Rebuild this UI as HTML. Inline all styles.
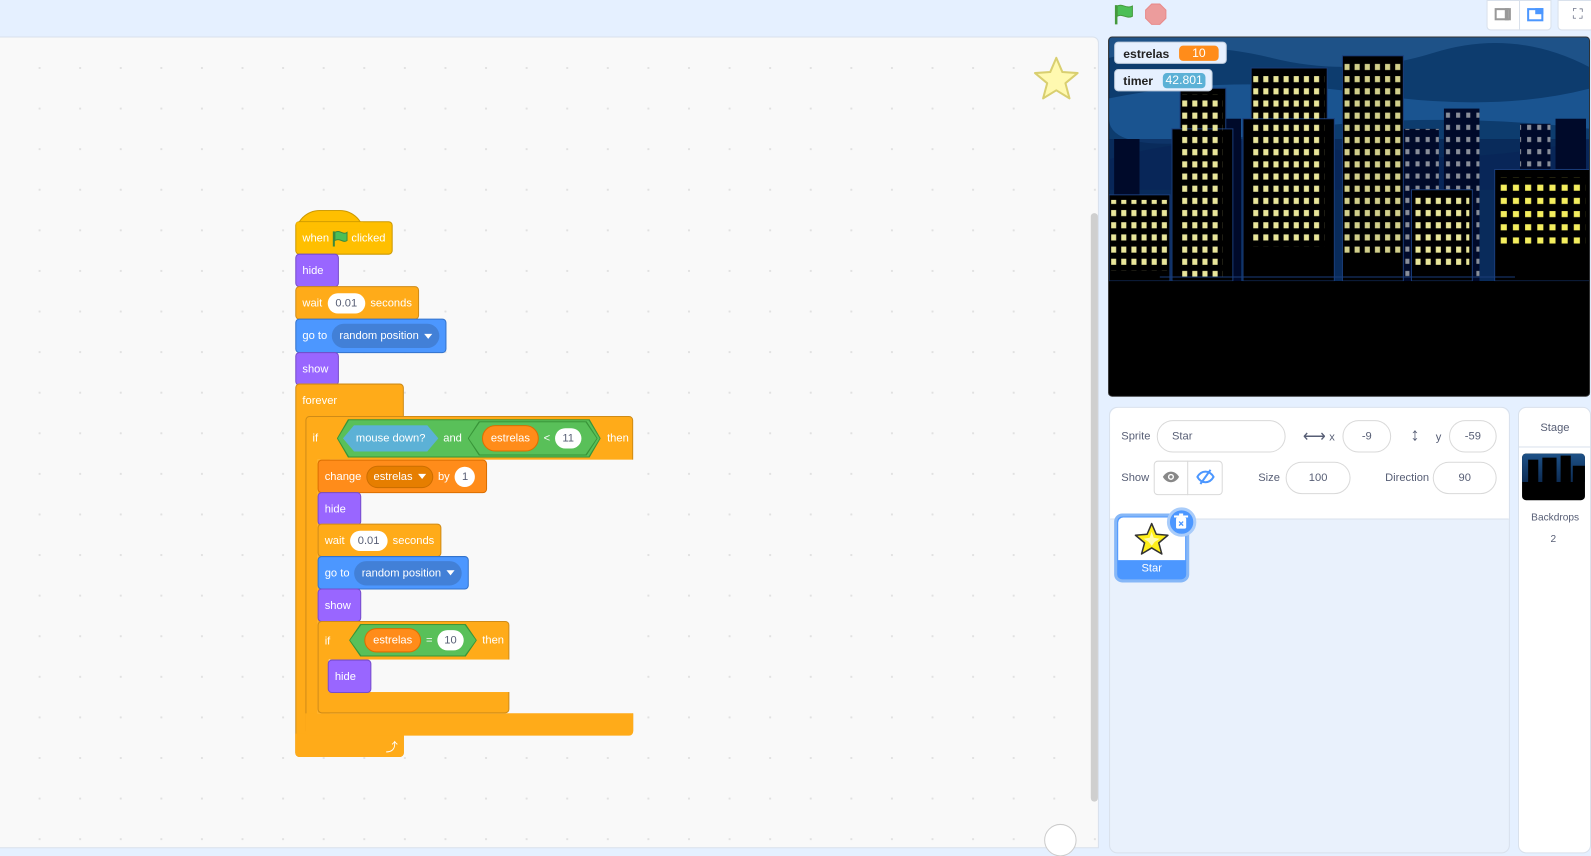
<!DOCTYPE html>
<html><head><meta charset="utf-8"><style>
*{box-sizing:border-box;margin:0;padding:0}
html,body{width:1591px;height:833px;overflow:hidden;background:#e5f0ff}
#root{position:absolute;left:0;top:0;width:1568px;height:821px;transform:scale(1.0147);transform-origin:0 0;font-family:"Liberation Sans",Arial,sans-serif}
.abs{position:absolute}
.code{left:-2px;top:36px;width:1085px;height:800px;background:#f9f9f9;border:1px solid #d9e1ec;border-radius:0 6px 0 0;
background-image:radial-gradient(#e1e1e1 1px,transparent 1.2px);background-size:40px 40px;background-position:20px 10px}
.b{position:absolute;color:#fff;font-size:11px;display:flex;align-items:center;padding-left:6px;padding-right:6px;white-space:nowrap;border-radius:4px}
.ev{background:#ffbf00;border:1px solid #cc9900}
.lo{background:#ffab19;border:1px solid #cf8b17}
.ct{background:#ffab19}
.lk{background:#9966ff;border:1px solid #774dcb}
.mo{background:#4c97ff;border:1px solid #3373cc}
.va{background:#ff8c1a;border:1px solid #db6e00}
.in{display:inline-flex;align-items:center;justify-content:center;background:#fff;color:#575e75;border-radius:11px;height:20px;padding:0 8px;margin:0 5px}
.dd{display:inline-flex;align-items:center;background:#4280d7;border-radius:12px;height:24px;padding:0 7px;margin-left:5px}
.dd2{display:inline-flex;align-items:center;background:#e67e00;border-radius:11px;height:22px;padding:0 6px;margin:0 5px;border:1px solid #cc6e00}
.tri{display:inline-block;width:0;height:0;border-left:4px solid transparent;border-right:4px solid transparent;border-top:5px solid #fff;margin-left:5px}
.hex{position:absolute;background:#59c059;clip-path:polygon(0 50%,11px 0,calc(100% - 11px) 0,100% 50%,calc(100% - 11px) 100%,11px 100%)}
.pill{position:absolute;color:#fff;font-size:11px;display:flex;align-items:center;justify-content:center}
.panel{background:#fff;border:1px solid #d9e1ec;border-radius:8px}
.lbl{position:absolute;font-size:11px;color:#575e75}
.fld{position:absolute;border:1px solid #d9d9d9;border-radius:16px;background:#fff;font-size:11px;color:#575e75;display:flex;align-items:center;justify-content:center}
</style></head><body><div id="root">
<div class="abs code"></div>
<div class="abs" style="left:1075px;top:210px;width:7px;height:580px;background:#cfcfcf;border-radius:4px"></div>
<div class="abs" style="left:1029px;top:812px;width:32px;height:32px;border:1px solid #ccc;border-radius:50%;background:#fff"></div>
<svg class="abs" style="left:1017px;top:54px" width="48" height="46" viewBox="0 0 48 46"><path d="M24 3 L30 17 L45 18 L33 28 L37 43 L24 35 L11 43 L15 28 L3 18 L18 17 Z" fill="#fff9b0" stroke="#d9cf70" stroke-width="2" stroke-linejoin="round"/></svg>

<div class="abs" style="left:291px;top:207px;width:68px;height:24px;background:#ffbf00;border-radius:34px 34px 0 0;border:1px solid #cc9900;border-bottom:none"></div>
<div class="b ev" style="left:291px;top:218px;min-width:96px;height:33px">when <svg width="16" height="16" style="margin:0 3px"><path d="M2 1v15" stroke="#3d8a3d" stroke-width="2"/><path d="M3 2c5-3 8 3 12 0v8c-4 3-7-3-12 0z" fill="#4cbf56" stroke="#3d8a3d"/></svg>clicked</div>
<div class="abs" style="left:292px;top:219px;width:66px;height:6px;background:#ffbf00"></div>
<div class="b lk" style="left:291px;top:250px;min-width:43px;height:33px">hide</div>
<div class="b lo" style="left:291px;top:282px;min-width:118px;height:33px">wait<span class="in">0.01</span>seconds</div>
<div class="b mo" style="left:291px;top:314px;min-width:144px;height:34px">go to<span class="dd">random position<span class="tri"></span></span></div>
<div class="b lk" style="left:291px;top:347px;min-width:43px;height:33px">show</div>
<div class="b lo" style="left:291px;top:378px;width:107px;height:368px;align-items:flex-start;padding-top:10px">forever</div>
<div class="abs" style="left:291px;top:723px;width:107px;height:23px;background:#ffab19;border-radius:0 0 4px 4px"></div>
<div class="abs" style="left:380px;top:727px;color:#fff;font-size:12px">⤴</div>
<div class="b ct" style="left:301px;top:410px;width:323px;height:314px;align-items:flex-start;padding-top:15px;border:1px solid #cf8b17">if</div>
<div class="abs" style="left:313px;top:453px;width:314px;height:250px;background:#f9f9f9"></div>
<div class="abs" style="left:313px;top:453px;width:12px;height:250px;background:#ffab19"></div>
<div class="hex" style="left:332px;top:413px;width:260px;height:38px;background:#389438"></div>
<div class="hex" style="left:333px;top:414px;width:258px;height:36px"></div>
<div class="hex" style="left:338px;top:419px;width:94px;height:26px;background:#5cb1d6"></div>
<div class="pill" style="left:338px;top:419px;width:94px;height:26px">mouse down?</div>
<div class="pill" style="left:432px;top:419px;width:28px;height:26px">and</div>
<div class="hex" style="left:461px;top:415px;width:128px;height:34px;background:#389438"></div>
<div class="hex" style="left:462px;top:416px;width:126px;height:32px"></div>
<div class="pill" style="left:475px;top:419px;width:56px;height:26px;background:#ff8c1a;border-radius:13px;border:1px solid #db6e00">estrelas</div>
<div class="pill" style="left:532px;top:419px;width:14px;height:26px">&lt;</div>
<div class="pill" style="left:547px;top:422px;width:26px;height:20px;background:#fff;color:#575e75;border-radius:10px">11</div>
<div class="pill" style="left:594px;top:419px;width:30px;height:26px">then</div>
<div class="abs" style="left:301px;top:703px;width:323px;height:22px;background:#ffab19;border-radius:0 0 4px 4px"></div>

<div class="b va" style="left:313px;top:453px;min-width:165px;height:33px">change<span class="dd2">estrelas<span class="tri"></span></span>by<span class="in" style="padding:0 7px">1</span></div>
<div class="b lk" style="left:313px;top:485px;min-width:43px;height:33px">hide</div>
<div class="b lo" style="left:313px;top:516px;min-width:118px;height:33px">wait<span class="in">0.01</span>seconds</div>
<div class="b mo" style="left:313px;top:548px;min-width:144px;height:33px">go to<span class="dd">random position<span class="tri"></span></span></div>
<div class="b lk" style="left:313px;top:580px;min-width:43px;height:33px">show</div>
<div class="b ct" style="left:313px;top:612px;width:189px;height:91px;align-items:flex-start;padding-top:13px;border:1px solid #cf8b17">if</div>
<div class="abs" style="left:324px;top:650px;width:181px;height:32px;background:#f9f9f9"></div>
<div class="hex" style="left:344px;top:615px;width:126px;height:32px;background:#389438"></div>
<div class="hex" style="left:345px;top:616px;width:124px;height:30px"></div>
<div class="pill" style="left:359px;top:619px;width:56px;height:24px;background:#ff8c1a;border-radius:12px;border:1px solid #db6e00">estrelas</div>
<div class="pill" style="left:415px;top:619px;width:16px;height:24px">=</div>
<div class="pill" style="left:431px;top:621px;width:26px;height:20px;background:#fff;color:#575e75;border-radius:10px">10</div>
<div class="pill" style="left:472px;top:619px;width:28px;height:24px">then</div>
<div class="b lk" style="left:323px;top:650px;min-width:43px;height:33px">hide</div>

<svg class="abs" style="left:1097px;top:3px" width="22" height="22"><path d="M3 2v19" stroke="#45993d" stroke-width="2.5"/><path d="M4 3c5-3 9 3 15 0v10c-6 3-10-3-15 0z" fill="#4cbf56" stroke="#45993d"/></svg>
<svg class="abs" style="left:1128px;top:3px" width="22" height="22"><polygon points="7,1 15,1 21,7 21,15 15,21 7,21 1,15 1,7" fill="#ec9c9c" stroke="#e88a8a"/></svg>
<div class="abs" style="left:1465px;top:0;width:64px;height:30px;background:#fff;border:1px solid #d9e1ec;border-radius:0 0 4px 4px"></div>
<div class="abs" style="left:1497px;top:0;width:1px;height:30px;background:#d9e1ec"></div>
<div class="abs" style="left:1473px;top:8px;width:16px;height:12px;border:2px solid #999"></div>
<div class="abs" style="left:1483px;top:8px;width:4px;height:12px;background:#999"></div>
<div class="abs" style="left:1505px;top:8px;width:16px;height:13px;border:2px solid #4c97ff"></div>
<div class="abs" style="left:1513px;top:8px;width:8px;height:6px;background:#4c97ff"></div>
<div class="abs" style="left:1535px;top:0;width:40px;height:30px;background:#fff;border:1px solid #d9e1ec;border-radius:0 0 4px 4px;font-size:14px;color:#575e75;text-align:center;padding-top:4px">⛶</div>

<div class="abs" style="left:1092px;top:36px;width:475px;height:355px;border:1px solid #333;border-radius:4px;overflow:hidden;background:#000">
<svg width="475" height="355" viewBox="0 0 475 355">
<defs>
<pattern id="w" width="10" height="12" patternUnits="userSpaceOnUse"><rect x="2" y="2" width="5" height="6" fill="#e9e69a"/></pattern>
<pattern id="w2" width="10" height="12" patternUnits="userSpaceOnUse"><rect x="2" y="2" width="4" height="5" fill="#8a8f9a"/></pattern>
<pattern id="w3" width="12" height="13" patternUnits="userSpaceOnUse"><rect x="2" y="2" width="6" height="6" fill="#f4ee5e"/></pattern>
</defs>
<rect width="475" height="240" fill="#0d3c6e"/>
<path d="M0 20 Q80 0 160 20 T320 15 T475 30 V0 H0z" fill="#1e5288"/>
<path d="M0 60 Q120 35 250 55 T475 50 V90 Q300 70 150 95 T0 80z" fill="#1e5a98" opacity=".8"/>
<path d="M0 120 Q100 90 220 110 T475 100 V150 H0z" fill="#0b3166"/>
<rect x="0" y="100" width="475" height="140" fill="#06204f" opacity=".6"/>
<g fill="#000a2a"><rect x="5" y="100" width="25" height="140"/><rect x="100" y="80" width="30" height="160"/><rect x="285" y="90" width="40" height="150"/><rect x="330" y="70" width="35" height="170"/><rect x="405" y="85" width="30" height="155"/><rect x="440" y="80" width="30" height="160"/></g>
<rect x="285" y="90" width="40" height="150" fill="url(#w2)"/><rect x="330" y="70" width="35" height="170" fill="url(#w2)"/><rect x="405" y="85" width="30" height="155" fill="url(#w2)"/>
<g fill="#000" stroke="#1a3d7a">
<rect x="0" y="155" width="60" height="85"/>
<rect x="70" y="50" width="45" height="190"/><rect x="62" y="90" width="60" height="150"/>
<rect x="140" y="30" width="75" height="210"/><rect x="132" y="80" width="90" height="160"/>
<rect x="230" y="18" width="60" height="222"/>
<rect x="298" y="150" width="60" height="90"/>
<rect x="380" y="130" width="95" height="110"/>
</g>
<rect x="2" y="160" width="56" height="70" fill="url(#w)"/>
<rect x="72" y="56" width="40" height="180" fill="url(#w)"/>
<rect x="142" y="36" width="70" height="170" fill="url(#w)"/>
<rect x="232" y="24" width="56" height="190" fill="url(#w)" opacity=".9"/>
<rect x="300" y="156" width="55" height="70" fill="url(#w)"/>
<rect x="385" y="138" width="85" height="70" fill="url(#w3)"/>
<rect x="0" y="240" width="475" height="115" fill="#000"/>
<line x1="50" y1="236" x2="400" y2="236" stroke="#1a3d7a"/>
</svg>
</div>
<div class="abs" style="left:1098px;top:41px;width:111px;height:22px;background:#e6f0ff;border:1px solid #c4d0e0;border-radius:4px;font-size:12px;font-weight:bold"><span style="position:absolute;left:8px;top:4px;color:#222">estrelas</span><span style="position:absolute;left:63px;top:3px;width:39px;height:15px;background:#ff8c1a;border-radius:4px;color:#fff;text-align:center;font-weight:normal">10</span></div>
<div class="abs" style="left:1098px;top:68px;width:97px;height:22px;background:#e6f0ff;border:1px solid #c4d0e0;border-radius:4px;font-size:12px;font-weight:bold"><span style="position:absolute;left:8px;top:4px;color:#222">timer</span><span style="position:absolute;left:47px;top:3px;width:42px;height:15px;background:#5cb1d6;border-radius:4px;color:#fff;text-align:center;font-weight:normal">42.801</span></div>

<div class="abs panel" style="left:1093px;top:401px;width:395px;height:440px;background:#e9f1fc"></div>
<div class="abs" style="left:1094px;top:402px;width:393px;height:110px;background:#fff;border-radius:8px 8px 0 0;border-bottom:1px solid #d9e1ec"></div>
<div class="lbl" style="left:1105px;top:424px">Sprite</div>
<div class="fld" style="left:1140px;top:414px;width:127px;height:32px;justify-content:flex-start;padding-left:14px">Star</div>
<div class="lbl" style="left:1284px;top:420px;font-size:16px">⟷</div>
<div class="lbl" style="left:1310px;top:425px">x</div>
<div class="fld" style="left:1323px;top:414px;width:48px;height:32px">-9</div>
<div class="lbl" style="left:1390px;top:418px;font-size:18px;font-weight:bold">↕</div>
<div class="lbl" style="left:1415px;top:425px">y</div>
<div class="fld" style="left:1428px;top:414px;width:47px;height:32px">-59</div>
<div class="lbl" style="left:1105px;top:465px">Show</div>
<div class="abs" style="left:1137px;top:454px;width:68px;height:34px;border:1px solid #d9d9d9;border-radius:4px;background:#fff"></div>
<div class="abs" style="left:1170px;top:454px;width:1px;height:34px;background:#d9d9d9"></div>
<svg class="abs" style="left:1145px;top:463px" width="18" height="14"><path d="M1 7c4-7 12-7 16 0c-4 7-12 7-16 0z" fill="#888"/><circle cx="9" cy="7" r="3" fill="#fff"/><circle cx="9" cy="7" r="1.6" fill="#888"/></svg>
<svg class="abs" style="left:1179px;top:462px" width="18" height="16"><path d="M1 8c4-7 12-7 16 0c-4 7-12 7-16 0z" fill="none" stroke="#4c97ff" stroke-width="2"/><path d="M4 15L14 1" stroke="#4c97ff" stroke-width="2"/></svg>
<div class="lbl" style="left:1240px;top:465px">Size</div>
<div class="fld" style="left:1267px;top:455px;width:64px;height:32px">100</div>
<div class="lbl" style="left:1365px;top:465px">Direction</div>
<div class="fld" style="left:1412px;top:455px;width:63px;height:32px">90</div>
<div class="abs" style="left:1098px;top:506px;width:74px;height:68px;border:3px solid #86b7f7;border-radius:8px;background:#4c97ff"></div>
<div class="abs" style="left:1102px;top:510px;width:66px;height:42px;background:#fff;border-radius:5px 5px 0 0"></div>
<svg class="abs" style="left:1117px;top:514px" width="36" height="34"><path d="M18 2 L22.5 12.5 L34 13.5 L25 21 L28 32 L18 26 L8 32 L11 21 L2 13.5 L13.5 12.5 Z" fill="#ffef1a" stroke="#333" stroke-width="1.5" stroke-linejoin="round"/><path d="M18 10L20 16L26 17L21 20L18 24L15 20L10 17L16 16Z" fill="#fffbb0"/></svg>
<div class="abs" style="left:1102px;top:554px;width:66px;text-align:center;color:#fff;font-size:11px">Star</div>
<div class="abs" style="left:1150px;top:500px;width:29px;height:29px;border-radius:50%;background:#4c97ff;border:3px solid #a9ccfa"></div>
<svg class="abs" style="left:1157px;top:506px" width="14" height="16"><rect x="2" y="4" width="10" height="11" rx="1.5" fill="#fff"/><rect x="0" y="2" width="14" height="2" fill="#fff"/><rect x="5" y="0" width="4" height="2" fill="#fff"/><path d="M5 8l4 4M9 8l-4 4" stroke="#4c97ff" stroke-width="1.3"/></svg>

<div class="abs panel" style="left:1496px;top:401px;width:72px;height:440px"></div>
<div class="abs" style="left:1497px;top:440px;width:70px;height:1px;background:#d9e1ec"></div>
<div class="lbl" style="left:1518px;top:416px">Stage</div>
<div class="abs" style="left:1500px;top:447px;width:62px;height:46px;border-radius:4px;overflow:hidden;background:#000">
<div style="height:28px;background:linear-gradient(#1e5288,#0d2c54)"></div>
<div style="position:absolute;left:6px;top:6px;width:10px;height:22px;background:#000"></div><div style="position:absolute;left:20px;top:4px;width:14px;height:24px;background:#000"></div><div style="position:absolute;left:38px;top:2px;width:10px;height:26px;background:#000"></div><div style="position:absolute;left:50px;top:12px;width:12px;height:16px;background:#000"></div>
</div>
<div class="lbl" style="left:1509px;top:505px;font-size:10px">Backdrops</div>
<div class="lbl" style="left:1528px;top:526px;font-size:10px">2</div>
</div></body></html>
